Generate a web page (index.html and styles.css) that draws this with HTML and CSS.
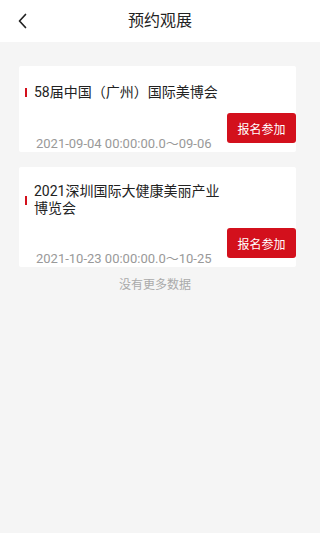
FILE: index.html
```html
<!DOCTYPE html>
<html lang="zh-CN">
<head>
<meta charset="utf-8">
<meta name="viewport" content="width=device-width, initial-scale=1">
<title>预约观展</title>
<link rel="stylesheet" href="styles.css">
</head>
<body>
<header class="nav">
  <span class="back">
    <svg width="14" height="20" viewBox="0 0 14 20"><path d="M8.5 3.5 L2.5 10 L8.5 16.5" fill="none" stroke="#222" stroke-width="1.7" stroke-linecap="round" stroke-linejoin="round"/></svg>
  </span>
  <h1 class="nav-title">预约观展</h1>
</header>
<main class="list">
  <section class="card">
    <div class="title-row">
      <span class="bar"></span>
      <h2 class="title">58届中国（广州）国际美博会</h2>
    </div>
    <div class="bottom-row">
      <span class="date">2021-09-04 00:00:00.0～09-06</span>
      <button class="btn">报名参加</button>
    </div>
  </section>
  <section class="card">
    <div class="title-row">
      <span class="bar"></span>
      <h2 class="title">2021深圳国际大健康美丽产业博览会</h2>
    </div>
    <div class="bottom-row">
      <span class="date">2021-10-23 00:00:00.0～10-25</span>
      <button class="btn">报名参加</button>
    </div>
  </section>
  <p class="nomore">没有更多数据</p>
</main>
</body>
</html>
```

FILE: styles.css
```css
* { box-sizing: border-box; }
html, body {
  margin: 0;
  padding: 0;
  background: #f5f5f5;
  font-family: Roboto, "Noto Sans CJK SC", sans-serif;
  color: #222;
}
.nav {
  position: relative;
  height: 42px;
  background: #fff;
  display: flex;
  align-items: center;
  justify-content: center;
}
.back {
  position: absolute;
  left: 17px;
  top: 11px;
  display: block;
  width: 14px;
  height: 20px;
}
.back svg { display: block; }
.nav-title {
  margin: 0;
  font-size: 16px;
  font-weight: 400;
  color: #222;
  line-height: 20px;
}
.list {
  padding: 24px 24px 0 19px;
  display: flex;
  flex-direction: column;
  gap: 15px;
}
.card {
  background: #fff;
  border-radius: 2px;
  padding: 16px 0 0 6px;
}
.title-row {
  display: flex;
  align-items: center;
  min-height: 20px;
}
.bar {
  width: 2px;
  height: 9px;
  background: #d3101c;
  margin-right: 7px;
  flex: none;
}
.title {
  margin: 0;
  width: 192px;
  font-size: 14px;
  font-weight: 400;
  line-height: 17px;
  color: #222;
}
.bottom-row {
  margin-top: 11px;
  height: 39px;
  display: flex;
  justify-content: space-between;
  align-items: flex-end;
  padding-left: 11px;
}
.date {
  font-size: 13px;
  line-height: 16px;
  color: #999;
  white-space: nowrap;
}
.btn {
  align-self: flex-start;
  width: 69px;
  height: 30px;
  border: 0;
  border-radius: 3px;
  background: #d3101c;
  color: #fff;
  font-family: Roboto, "Noto Sans CJK SC", sans-serif;
  font-size: 12px;
  padding: 0;
}
.nomore {
  margin: -5px 0 0;
  text-align: center;
  font-size: 12px;
  line-height: 16px;
  color: #aaa;
  padding-right: 5px;
}
```
